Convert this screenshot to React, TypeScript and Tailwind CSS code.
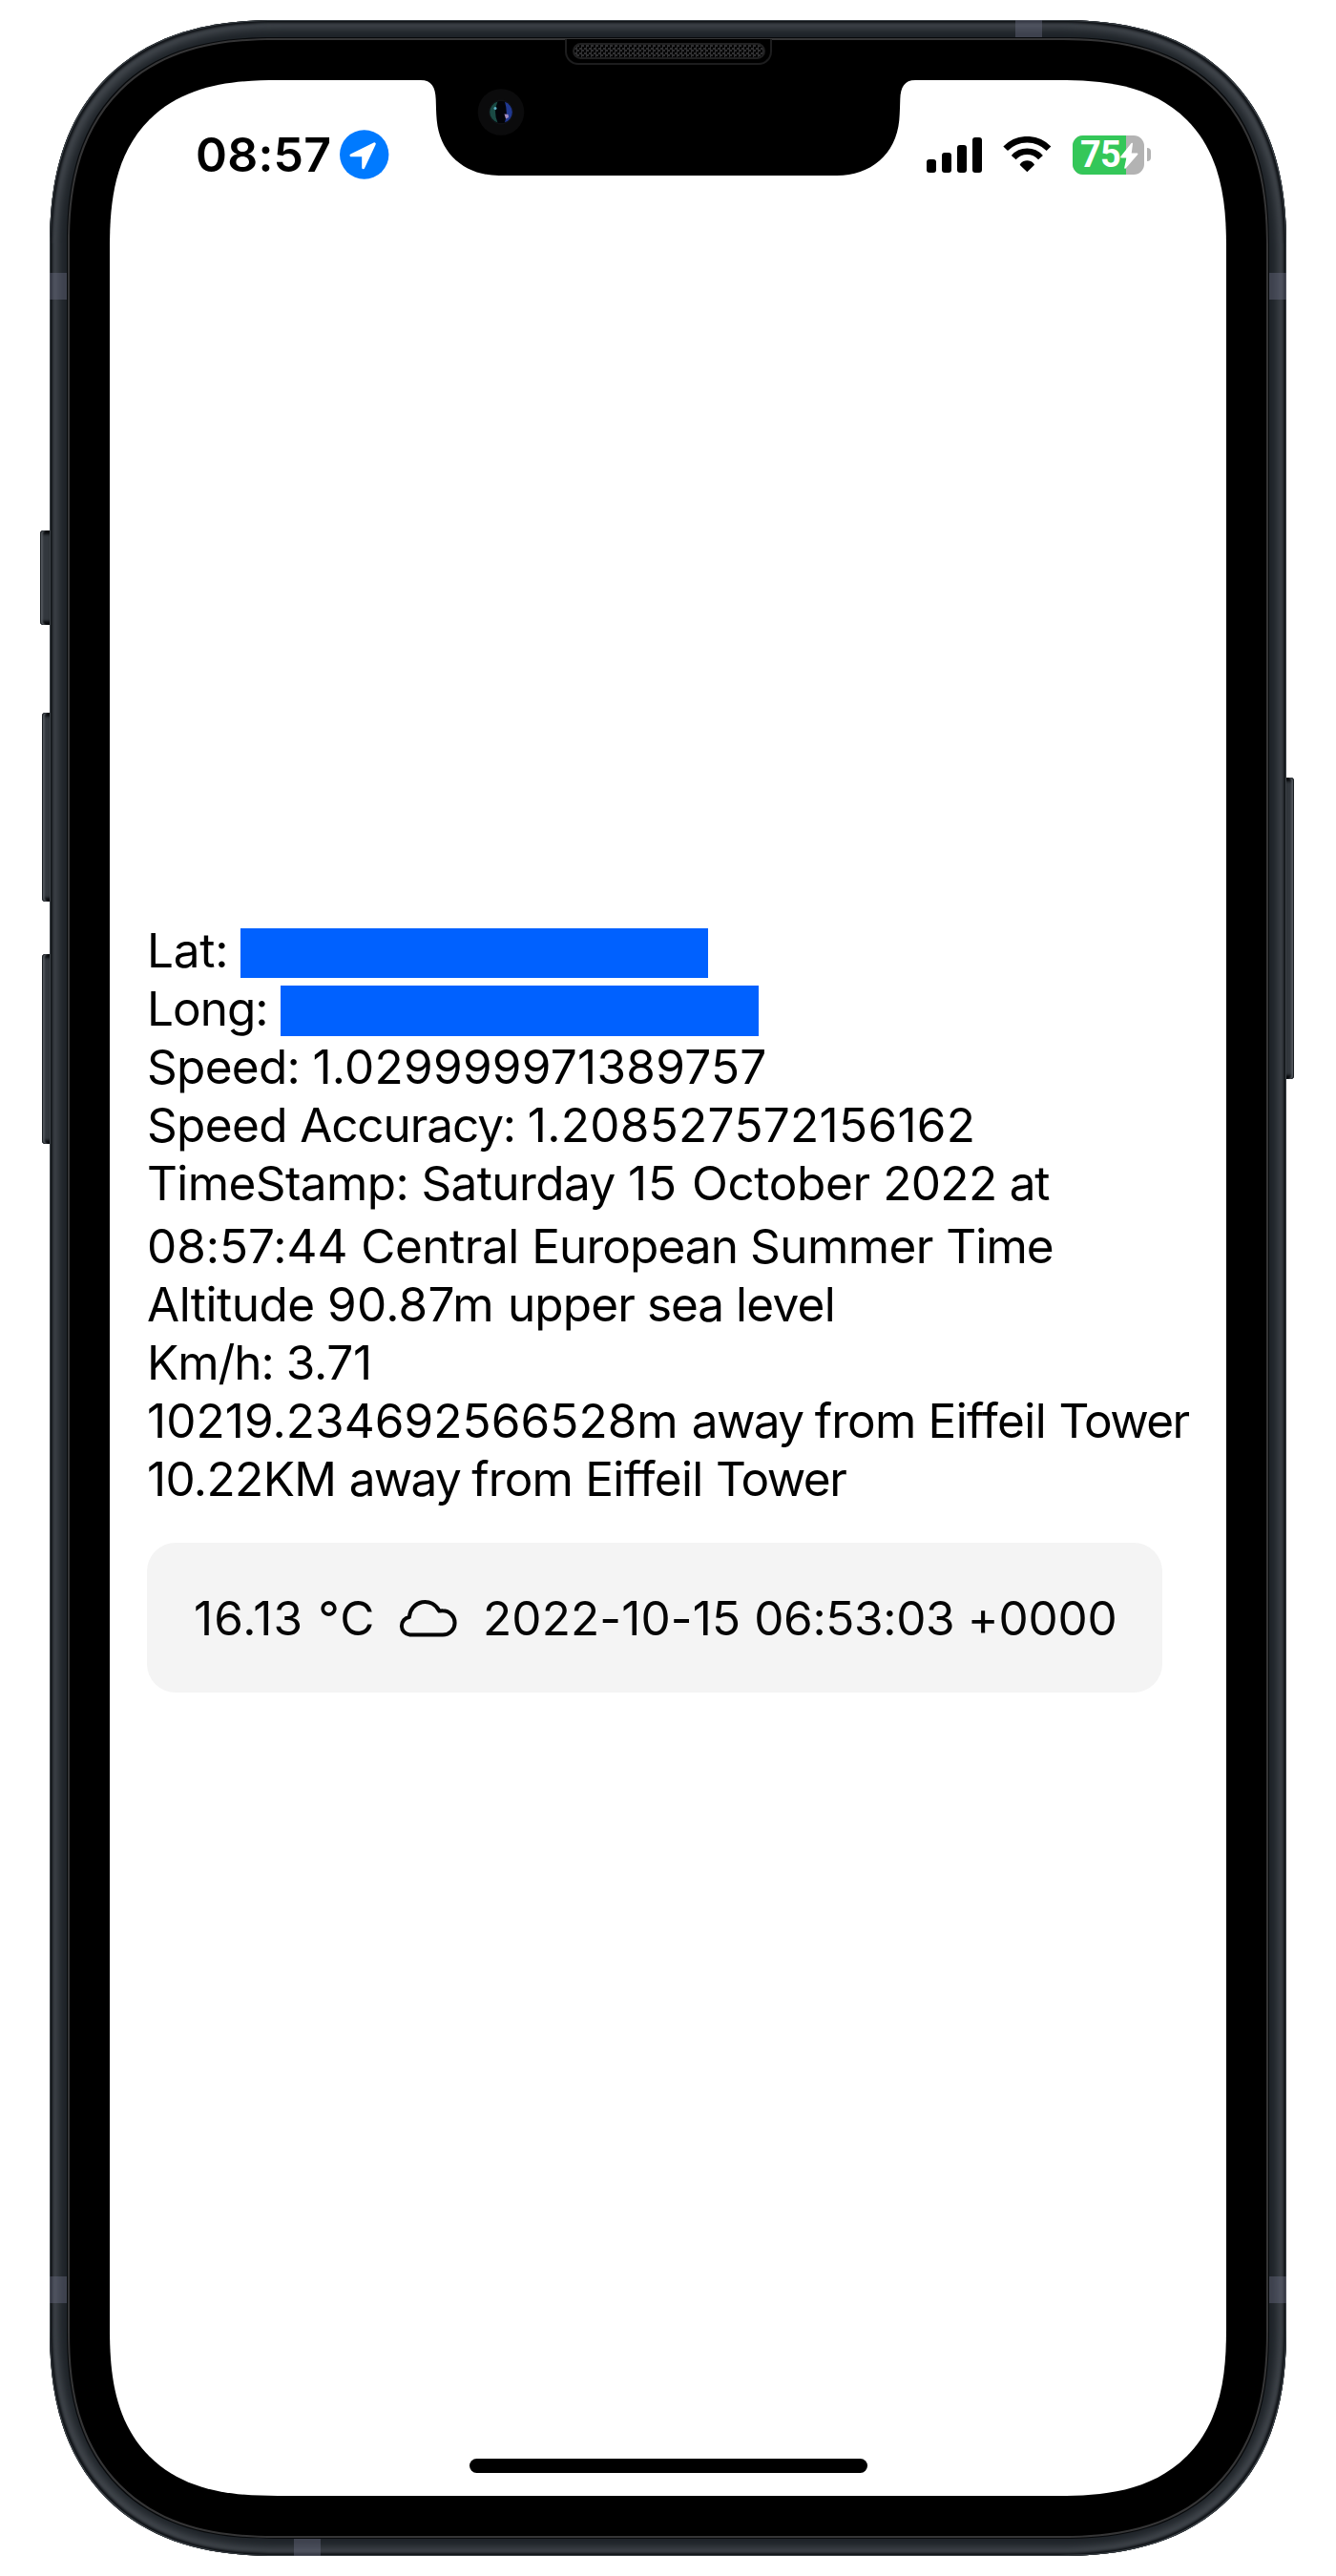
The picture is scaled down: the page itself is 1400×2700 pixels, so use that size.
type Part = [text: string, tracking: string];

function Line({ parts }: { parts: Part[] }) {
  return (
    <p className="h-[61px] pt-px leading-[61px] whitespace-pre">
      {parts.map(([text, tracking], i) => (
        <span key={i} className={tracking}>{text}</span>
      ))}
    </p>
  );
}

function SideButton({ className, side }: { className: string; side: 'left' | 'right' }) {
  return (
    <div
      className={`absolute bg-[#32373d] ${side === 'left'
        ? 'rounded-l-[4px] shadow-[inset_1px_0_0_#1b1f23,inset_4px_0_2px_-1px_#53585e,inset_0_4px_3px_#07090c,inset_0_-4px_3px_#07090c]'
        : 'rounded-r-[4px] shadow-[inset_-1px_0_0_#1b1f23,inset_-4px_0_2px_-1px_#53585e,inset_0_4px_3px_#07090c,inset_0_-4px_3px_#07090c]'} ${className}`}
    />
  );
}

function LocationBadge() {
  return (
    <svg className="h-[52px] w-[52px]" viewBox="0 0 52 52">
      <circle cx="25.7" cy="26" r="25.7" fill="#007aff" />
      <path d="M36.3 14.800 12 26.800h12.700v12.900z" fill="#fff" stroke="#fff" strokeWidth="3" strokeLinejoin="round" />
    </svg>
  );
}

function Signal() {
  return (
    <div className="flex h-[37px] items-end gap-[6px]">
      <i className="h-[14px] w-[10px] rounded-[3px] bg-black" />
      <i className="h-[21px] w-[10px] rounded-[3px] bg-black" />
      <i className="h-[29px] w-[10px] rounded-[3px] bg-black" />
      <i className="h-[37px] w-[10px] rounded-[3px] bg-black" />
    </div>
  );
}

function Wifi() {
  return (
    <svg className="h-[38px] w-[51px]" viewBox="34 38 153 114">
      <g fill="none" stroke="#000" strokeWidth="19.5">
        <path d="M42 76.4A94.5 94.5 0 0 1 178 76.4" />
        <path d="M67.6 104.3A57 57 0 0 1 152.4 104.3" />
      </g>
      <path d="M110 150 87.5 128q-1-2 1-4Q98 114 110 114t21.5 10q2 2 1 4z" />
    </svg>
  );
}

function Battery() {
  return (
    <div className="flex items-center gap-[3px]">
      <div className="relative flex h-[41px] w-[75px] items-center overflow-hidden rounded-[11px] bg-[#b3b3b3]">
        <div className="absolute inset-y-0 left-0 w-[56px] bg-[#34c759]" />
        <span className="relative ml-[8px] font-['Roboto',sans-serif] text-[38px] leading-none font-bold tracking-[-0.8px] text-white">75</span>
        <svg className="absolute top-[7px] left-[49px] h-[29px] w-[21px]" viewBox="0 0 21 29">
          <path d="M13.2 1.6 2 15.6h6.4L6 27 18.6 12.4h-6.8z" fill="#fff" stroke="#fff" strokeWidth="1.6" strokeLinejoin="round" />
        </svg>
      </div>
      <div className="h-[14px] w-[4px] rounded-r-[4px] bg-[#b3b3b3]" />
    </div>
  );
}

function Cloud() {
  return (
    <svg className="h-[41px] w-[61px]" viewBox="0 0 61 41" fill="none" stroke="#050505" strokeWidth="4" strokeLinejoin="round">
      <path d="M11.500 38.5H46A12.6 12.6 0 0 0 46 13.3Q44.400 13.2 42.300 13.600A16.4 16.4 0 0 0 11 19.5V20A9.300 9.300 0 0 0 11.500 38.5Z" />
    </svg>
  );
}

function Notch() {
  return (
    <svg className="absolute top-[-1px] left-[320px] h-[102px] w-[530px]" viewBox="435 83 530 102">
      <path d="M435 83V84H441C452 84 456.4 91 456.7 104C457 112 457 118 457.7 126C461 162 488 184 523 184H877C912 184 939 162 942.3 126C943 118 943 112 943.3 104C943.6 91 948 84 959 84H965V83Z" />
      <circle cx="525" cy="117.5" r="24.3" fill="#0b0b0c" />
      <circle cx="525" cy="117.5" r="13" fill="#101114" />
      <circle cx="525" cy="117.5" r="11.5" fill="#020308" />
      <path d="M521.5 106.6a11.3 11.3 0 0 0 0 21.8q-5-11 0-21.8z" fill="#1a4a44" />
      <path d="M529 106.8a11.3 11.3 0 0 1 0 21.5q3.5-10.5 0-21.5z" fill="#203890" />
      <circle cx="519" cy="113.5" r="1.5" fill="#5fb2c8" />
      <path d="M528.5 119.5l4 .5.5 3-3 1.5z" fill="#a48cc0" />
    </svg>
  );
}

function Speaker() {
  return (
    <div className="absolute top-[-1px] left-[519px] flex h-[27px] w-[217px] justify-center rounded-b-[14px] border-2 border-t-0 border-[#1d1d1e] bg-black pt-[4px]">
      <div className="h-[17px] w-[202px] rounded-full border-2 border-[#202021] bg-[#050505] bg-[conic-gradient(#303032_25%,#050505_0_50%,#303032_0_75%,#050505_0)] bg-[length:5px_5px]" />
    </div>
  );
}

export default function App() {
  return (
    <div className="h-[2700px] w-[1400px] bg-white px-[52px] pt-[21px] font-['Inter',sans-serif] text-[49.5px] text-black">
      <div className="relative h-[2658px] w-[1296px]">
        <SideButton side="left" className="top-[535px] left-[-10px] h-[99px] w-[12px]" />
        <SideButton side="left" className="top-[726px] left-[-8px] h-[198px] w-[10px]" />
        <SideButton side="left" className="top-[979px] left-[-8px] h-[199px] w-[10px]" />
        <SideButton side="right" className="top-[794px] right-[-8px] h-[316px] w-[10px]" />
        <div className="relative h-full rounded-[238px] bg-[#1e2328] p-[19px] shadow-[inset_0_0_0_1px_#3c4247,inset_0_0_3px_3px_#0b0e12,inset_0_0_8px_9px_#43484e] [corner-shape:superellipse(1.255)]">
          <div className="absolute top-[265px] left-0 h-[28px] w-[18px] bg-[#6f7086]/40" />
          <div className="absolute top-[265px] right-0 h-[28px] w-[18px] bg-[#6f7086]/40" />
          <div className="absolute top-[2365px] left-0 h-[28px] w-[18px] bg-[#6f7086]/40" />
          <div className="absolute top-[2365px] right-0 h-[28px] w-[18px] bg-[#6f7086]/40" />
          <div className="absolute top-0 left-[1012px] h-[18px] w-[28px] bg-[#6f7086]/40" />
          <div className="absolute bottom-0 left-[256px] h-[18px] w-[28px] bg-[#6f7086]/40" />
          <div className="relative h-full rounded-[218px] border-2 border-[#353536] bg-black p-[42px] shadow-[0_0_0_1px_#07090b] [corner-shape:superellipse(1.284)]">
            <Speaker />
            <main className="relative flex h-[2532px] w-[1170px] flex-col rounded-[176px] bg-white [corner-shape:superellipse(1.366)]">
              <Notch />
              <header className="flex h-[156px] items-center justify-between pr-[79px] pl-[90px]">
                <div className="flex items-center">
                  <time className="w-[151px] text-[50px] leading-none font-[560] tracking-[0.2px]">08:57</time>
                  <LocationBadge />
                </div>
                <div className="flex items-center">
                  <Signal />
                  <div className="mx-[22px]"><Wifi /></div>
                  <Battery />
                </div>
              </header>
              <section className="mt-[725px] pl-[39px]">
                <div className="flex h-[61px]">
                  <p className="w-[98px] pt-px leading-[61px] tracking-[-0.21px]">Lat:</p>
                  <div className="mt-[8px] h-[52px] w-[490px] bg-[#0061ff]" />
                </div>
                <div className="flex h-[61px]">
                  <p className="w-[140px] pt-px leading-[61px] tracking-[-0.98px]">Long:</p>
                  <div className="mt-[7px] h-[53px] w-[501px] bg-[#0061ff]" />
                </div>
                <Line parts={[['Speed: ', 'tracking-[-0.7px]'], ['1.029999971389757', 'tracking-[0.26px]']]} />
                <Line parts={[['Speed ', 'tracking-[-0.65px]'], ['Accuracy: ', 'tracking-[-1.1px]'], ['1.208527572156162', 'tracking-[0.29px]']]} />
                <div className="flex flex-col gap-[5px]">
                  <Line
                    parts={[
                      ['TimeStamp: ', 'tracking-[-0.6px]'],
                      ['Saturday ', 'tracking-[-0.6px]'],
                      ['15 ', 'tracking-[0.95px]'],
                      ['October ', 'tracking-[-0.38px]'],
                      ['2022 ', 'tracking-[-0.63px]'],
                      ['at', 'tracking-[-1.3px]'],
                    ]}
                  />
                  <Line
                    parts={[
                      ['08:57:44 ', 'tracking-[-0.05px]'],
                      ['Central ', 'tracking-[-0.47px]'],
                      ['European ', 'tracking-[-0.94px]'],
                      ['Summer ', 'tracking-[-0.54px]'],
                      ['Time', 'tracking-[-0.95px]'],
                    ]}
                  />
                </div>
                <Line
                  parts={[
                    ['Altitude ', 'tracking-[-0.5px]'],
                    ['90.87m ', 'tracking-[0.22px]'],
                    ['upper ', 'tracking-[-0.87px]'],
                    ['sea ', 'tracking-[-1.07px]'],
                    ['level', 'tracking-[-0.68px]'],
                  ]}
                />
                <Line parts={[['Km/h: ', 'tracking-[-1.03px]'], ['3.71', 'tracking-[-0.25px]']]} />
                <Line
                  parts={[
                    ['10219.234692566528m ', 'tracking-[0.07px]'],
                    ['away ', 'tracking-[-1.65px]'],
                    ['from ', 'tracking-[-0.85px]'],
                    ['Eiffeil ', 'tracking-[-0.61px]'],
                    ['Tower', 'tracking-[-1.55px]'],
                  ]}
                />
                <Line
                  parts={[
                    ['10.22KM ', 'tracking-[-0.62px]'],
                    ['away ', 'tracking-[-1.71px]'],
                    ['from ', 'tracking-[-0.85px]'],
                    ['Eiffeil ', 'tracking-[-0.61px]'],
                    ['Tower', 'tracking-[-1.55px]'],
                  ]}
                />
                <div className="mt-[37px] flex h-[157px] w-[1064px] items-center rounded-[30px] bg-[#f4f4f4] pl-[49px] text-[#050505]">
                  <p className="w-[215px] pt-[2px] leading-none tracking-[1.06px]">16.13 °C</p>
                  <Cloud />
                  <p className="ml-[27px] pt-[2px] leading-none whitespace-pre">
                    <span className="tracking-[0.12px]">2022-10-15 </span>
                    <span className="tracking-[-0.35px]">06:53:03 </span>
                    <span className="tracking-[-0.2px]">+0000</span>
                  </p>
                </div>
              </section>
              <div className="mx-auto mt-auto mb-[24px] h-[15px] w-[417px] rounded-full bg-black" />
            </main>
          </div>
        </div>
      </div>
    </div>
  );
}
